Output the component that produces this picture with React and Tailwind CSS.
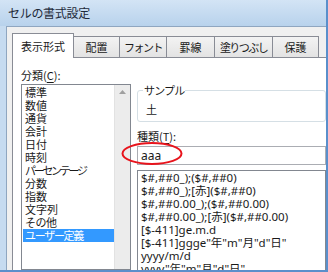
export default function App() {
  const cats = [
    ["標準", ""],
    ["数値", ""],
    ["通貨", ""],
    ["会計", ""],
    ["日付", ""],
    ["時刻", ""],
    ["パーセンテージ", "tracking-[-2.3px]"],
    ["分数", ""],
    ["指数", ""],
    ["文字列", ""],
    ["その他", "tracking-[-0.5px]"],
    ["ユーザー定義", "tracking-[-1.3px]"],
  ];
  const fmts = [
    '$#,##0_);($#,##0)',
    '$#,##0_);[赤]($#,##0)',
    '$#,##0.00_);($#,##0.00)',
    '$#,##0.00_);[赤]($#,##0.00)',
    '[$-411]ge.m.d',
    '[$-411]ggge"年"m"月"d"日"',
    'yyyy/m/d',
    'yyyy"年"m"月"d"日"',
  ];
  const tabs = [
    ["配置", "w-[47px]", ""],
    ["フォント", "w-[48px]", "tracking-[-1.5px]"],
    ["罫線", "w-[49px]", ""],
    ["塗りつぶし", "w-[59px]", "tracking-[-1.6px]"],
    ["保護", "w-[47px]", ""],
  ];
  return (
    <div className="relative w-[328px] h-[272px] overflow-hidden flex flex-col bg-[#c6dbf0] border-r-2 border-b-2 border-[#5a8fcb] font-['Noto_Sans_CJK_JP',sans-serif] text-[11px] text-[#1a1a1a]">
      <div className="h-[26px] shrink-0 flex items-center pl-[8px] bg-gradient-to-b from-[#d3e4f5] to-[#b8d2ec] text-[12px] text-[#1e2a3a] tracking-[-0.3px]">
        セルの書式設定
      </div>
      <div className="flex-1 flex min-h-0 pl-[6px]">
        <div className="flex-1 flex flex-col min-h-0 border-l border-t border-[#8fa6c0] bg-[#f0f0f0] pl-[5px] pt-[6px]">
          <div className="flex items-end shrink-0">
            <div className="relative z-10 -mb-px w-[62px] h-[25px] border border-b-0 border-[#898c95] bg-white flex items-center justify-center whitespace-nowrap">
              表示形式
            </div>
            {tabs.map(([t, w, tr]) => (
              <div key={t} className={`-ml-px h-[21px] ${w} ${tr} border border-b-0 border-[#898c95] bg-gradient-to-b from-[#f3f3f3] to-[#e3e3e3] flex items-center justify-center whitespace-nowrap`}>
                {t}
              </div>
            ))}
          </div>
          <div className="flex-1 min-h-0 border-l border-t border-[#898c95] bg-white flex pl-[8px] pt-[8px]">
            <div className="w-[110px] shrink-0 flex flex-col min-h-0">
              <div className="h-[18px] leading-[18px]">
                分類(<span className="underline underline-offset-2">C</span>):
              </div>
              <div className="flex-1 min-h-0 border border-[#828790] bg-white flex">
                <div className="flex-1 pt-[1px] pl-[1px] leading-[13px]">
                  {cats.map(([c, tr], i) => (
                    <div key={c} className={`h-[13px] pl-[2px] whitespace-nowrap ${tr} ${i === 11 ? "bg-[#3399ff] text-white" : ""}`}>
                      {c}
                    </div>
                  ))}
                </div>
                <div className="w-[16px] bg-[#ececec] border-l border-[#e2e2e2] flex justify-center pt-[5px]">
                  <svg width="7" height="4" viewBox="0 0 7 4">
                    <path d="M0 4 L3.5 0 L7 4 Z" fill="#a0a0a0" />
                  </svg>
                </div>
              </div>
            </div>
            <div className="flex-1 ml-[6px] flex flex-col min-h-0">
              <div className="relative mt-[24px] h-[32px] shrink-0 border border-[#d5dfe5] rounded-[3px] pl-[8px] pt-[11px] leading-[14px]">
                <span className="absolute left-[5px] -top-[8px] bg-white px-[1px] leading-[14px] tracking-[-0.8px]">サンプル</span>
                土
              </div>
              <div className="mt-[6px] h-[16px] leading-[16px] shrink-0">
                種類(<span className="underline underline-offset-2">T</span>):
              </div>
              <div className="mt-[2px] h-[19px] shrink-0 border border-[#abadb3] bg-white pl-[3px] leading-[17px] text-[12px] font-['Noto_Sans',sans-serif]">
                aaa
              </div>
              <div className="mt-[5px] flex-1 min-h-0 overflow-hidden border border-[#828790] border-b-0 bg-white pl-[3px] leading-[13px] font-['Noto_Sans','Noto_Sans_CJK_JP',sans-serif] text-[11.5px]">
                {fmts.map((f) => (
                  <div key={f} className="h-[13px] whitespace-nowrap">{f}</div>
                ))}
              </div>
            </div>
          </div>
        </div>
      </div>
      <svg className="absolute left-[121px] top-[141px]" width="64" height="25" viewBox="0 0 64 25">
        <ellipse cx="31" cy="12.5" rx="29.5" ry="10.5" fill="none" stroke="#e8141c" strokeWidth="2" />
      </svg>
    </div>
  );
}
